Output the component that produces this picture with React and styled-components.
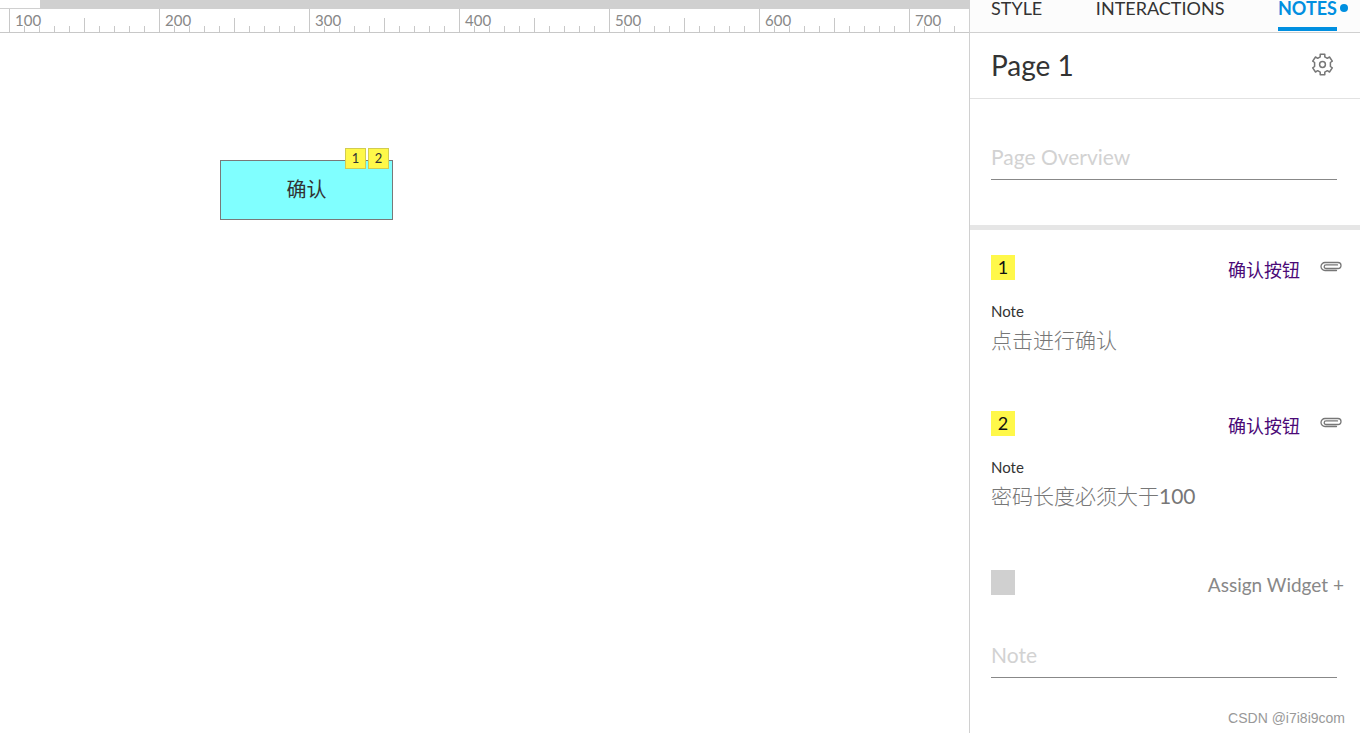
import React, { useState } from 'react'
import styled, { createGlobalStyle } from 'styled-components';

const GlobalStyle = createGlobalStyle`
  * {
    box-sizing: border-box;
  }
  body {
    margin: 0;
    background: #fff;
    color: #333;
    font-family: Lato, "Noto Sans CJK SC", sans-serif;
  }
  button, input {
    font-family: inherit;
  }
`;

const Workspace = styled.div`
  position: relative;
  display: flex;
  min-height: 100vh;
  overflow: hidden;
`;

const Editor = styled.main`
  flex: 1;
  min-width: 0;
  display: flex;
  flex-direction: column;
  overflow: hidden;
`;

const TabStrip = styled.div`
  display: flex;
  height: 9px;
  background: #d0d0d0;
`;

const OpenTab = styled.div`
  width: 40px;
  background: #fff;
  border-bottom: 1px solid #d0d0d0;
`;

const Ruler = styled.div`
  display: flex;
  height: 24px;
  padding-left: 9px;
  border-bottom: 1px solid #c8c8c8;
  overflow: hidden;
`;

const RulerSegment = styled.div`
  position: relative;
  flex: none;
  display: flex;
  align-items: flex-end;
  height: 100%;
`;

const Tick = styled.div`
  width: 15px;
  height: ${props => props.$height};
  border-left: 1px solid #c8c8c8;
`;

const RulerLabel = styled.span`
  position: absolute;
  left: 6px;
  top: 1px;
  font-size: 15px;
  line-height: 20px;
  color: #888;
`;

const Canvas = styled.div`
  position: relative;
  flex: 1;
`;

const Widget = styled.button`
  position: absolute;
  left: 220px;
  top: 127px;
  width: 173px;
  height: 60px;
  padding: 0 0 4px;
  border: 1px solid #797979;
  background: #80ffff;
  color: #333;
  font-size: 20px;
`;

const Footnotes = styled.span`
  position: absolute;
  right: 3px;
  top: -13px;
  display: flex;
  gap: 2px;
`;

const Footnote = styled.span`
  width: 21px;
  height: 21px;
  border: 1px solid #d2cc50;
  background: #fff849;
  font-size: 13px;
  line-height: 18px;
  text-align: center;
`;

const Inspector = styled.aside`
  flex: 0 0 391px;
  border-left: 1px solid #d0d0d0;
`;

const Tabs = styled.nav`
  display: flex;
  justify-content: space-between;
  height: 33px;
  padding: 0 23px 0 21px;
  background: #fcfcfc;
  border-bottom: 1px solid #d0d0d0;
`;

const Tab = styled.button`
  position: relative;
  height: 31px;
  padding: 0 0 10px;
  border: none;
  border-bottom: 4px solid ${props => props.$active ? '#008fe0' : 'transparent'};
  background: none;
  color: ${props => props.$active ? '#008fe0' : '#333'};
  font-size: 18px;
  font-weight: ${props => props.$active ? 'bold' : 'normal'};
  line-height: 17px;
  cursor: pointer;
`;

const Dot = styled.span`
  position: absolute;
  left: calc(100% + 3px);
  top: 4px;
  width: 8px;
  height: 8px;
  border-radius: 50%;
  background: #008fe0;
`;

const PageHeader = styled.header`
  display: flex;
  align-items: center;
  justify-content: space-between;
  height: 66px;
  padding: 0 26px 2px 21px;
  border-bottom: 1px solid #e2e2e2;
`;

const PageTitle = styled.h1`
  margin: 0;
  font-size: 28px;
  font-weight: normal;
`;

const IconButton = styled.button`
  display: flex;
  padding: 0;
  border: none;
  background: none;
  color: #777;
  cursor: pointer;
`;

const Overview = styled.section`
  padding: 36px 23px 45px 21px;
  border-bottom: 5px solid #e6e6e6;
`;

const Field = styled.input`
  display: block;
  width: 100%;
  height: 45px;
  padding: 0 0 2px;
  border: none;
  border-bottom: 1px solid #888;
  background: none;
  color: #777;
  font-size: 21px;
  outline: none;
  &::placeholder {
    color: #d2d2d2;
    opacity: 1;
  }
`;

const NoteList = styled.section`
  padding-top: 25px;
`;

const NoteItem = styled.article`
  height: 156px;
  padding: 0 18px 0 21px;
`;

const NewNote = styled.article`
  display: flex;
  flex-direction: column;
  gap: 16px;
  padding: 3px 23px 0 21px;
`;

const NoteHead = styled.div`
  display: flex;
  align-items: flex-start;
  height: 47px;
`;

const Marker = styled.span`
  width: 24px;
  height: 25px;
  margin-right: auto;
  background: ${props => props.$empty ? '#d0d0d0' : '#fff849'};
  color: #111;
  font-size: 18px;
  line-height: 24px;
  text-align: center;
`;

const WidgetLink = styled.a`
  margin-right: 20px;
  color: #4b0a77;
  font-size: 18px;
  line-height: 30px;
  text-decoration: none;
`;

const ClipButton = styled(IconButton)`
  padding-top: 6px;
`;

const NoteLabel = styled.label`
  display: block;
  font-size: 15px;
  line-height: 18px;
`;

const NoteValue = styled.input`
  width: 100%;
  height: 38px;
  padding: 0;
  border: none;
  background: none;
  color: #777;
  font-family: Lato, "Noto Sans CJK SC Light", "Noto Sans CJK SC", sans-serif;
  font-size: 21px;
  outline: none;
`;

const AssignButton = styled.button`
  margin-right: -7px;
  padding: 0;
  border: none;
  background: none;
  color: #888;
  font-size: 19px;
  line-height: 29px;
  cursor: pointer;
`;

const Watermark = styled.footer`
  position: absolute;
  right: 15px;
  bottom: 6px;
  color: #999;
  font-family: "Liberation Sans", sans-serif;
  font-size: 14px;
  line-height: 18px;
`;

const marks = [100, 200, 300, 400, 500, 600, 700];
const tabs = ['STYLE', 'INTERACTIONS', 'NOTES'];
const initialNotes = [
  { id: 1, widget: '确认按钮', text: '点击进行确认' },
  { id: 2, widget: '确认按钮', text: '密码长度必须大于100' },
];

const tickHeight = (index) => {
  if (index === 0) return '100%';
  return index === 5 ? '14px' : '6px';
}

function GearIcon() {
  return (
    <svg width="23" height="23" viewBox="0 0 23 23" fill="none" stroke="currentColor" strokeWidth="1.5" strokeLinejoin="round">
      <path d="M9.2 1.3h4.6v2.6l2.5 1.4 2.2-1.3 2.8 4.2-1.9 1.3v4l1.9 1.3-2.8 4.2-2.2-1.3-2.5 1.4v2.6H9.2v-2.6l-2.5-1.4L4.5 19l-2.8-4.2 1.9-1.3v-4L1.7 8.2 4.5 4l2.2 1.3 2.5-1.4z" />
      <circle cx="11.5" cy="11.5" r="2.9" />
    </svg>
  )
}

function ClipIcon() {
  return (
    <svg width="22" height="11" viewBox="0 0 22 11" fill="none" stroke="currentColor" strokeWidth="1.3" strokeLinecap="round">
      <path d="M16.5 9.5H5a4 4 0 0 1 0-8h13a3 3 0 0 1 0 6H6a1.8 1.8 0 0 1 0-3.6h11.5" />
    </svg>
  )
}

function App() {
  const [activeTab, setActiveTab] = useState('NOTES');
  const [notes, setNotes] = useState(initialNotes);

  const handleChange = (id, text) => {
    setNotes(notes.map(note => note.id === id ? { ...note, text } : note));
  }

  return (
    <Workspace>
      <GlobalStyle />
      <Editor>
        <TabStrip>
          <OpenTab />
        </TabStrip>
        <Ruler>
          {marks.map(mark => (
            <RulerSegment key={mark}>
              {Array.from({ length: 10 }, (_, i) => <Tick key={i} $height={tickHeight(i)} />)}
              <RulerLabel>{mark}</RulerLabel>
            </RulerSegment>
          ))}
        </Ruler>
        <Canvas>
          <Widget>
            确认
            <Footnotes>
              {notes.map(note => <Footnote key={note.id}>{note.id}</Footnote>)}
            </Footnotes>
          </Widget>
        </Canvas>
      </Editor>
      <Inspector>
        <Tabs>
          {tabs.map(tab => (
            <Tab key={tab} $active={tab === activeTab} onClick={() => setActiveTab(tab)}>
              {tab}
              {tab === 'NOTES' && <Dot />}
            </Tab>
          ))}
        </Tabs>
        <PageHeader>
          <PageTitle>Page 1</PageTitle>
          <IconButton aria-label="Settings"><GearIcon /></IconButton>
        </PageHeader>
        <Overview>
          <Field aria-label="Page Overview" placeholder="Page Overview" />
        </Overview>
        <NoteList>
          {notes.map(note => (
            <NoteItem key={note.id}>
              <NoteHead>
                <Marker>{note.id}</Marker>
                <WidgetLink href="#widget">{note.widget}</WidgetLink>
                <ClipButton aria-label="Attach"><ClipIcon /></ClipButton>
              </NoteHead>
              <NoteLabel htmlFor={`note-${note.id}`}>Note</NoteLabel>
              <NoteValue
                id={`note-${note.id}`}
                value={note.text}
                onChange={e => handleChange(note.id, e.target.value)}
              />
            </NoteItem>
          ))}
          <NewNote>
            <NoteHead>
              <Marker $empty />
              <AssignButton>Assign Widget +</AssignButton>
            </NoteHead>
            <Field aria-label="Note" placeholder="Note" />
          </NewNote>
        </NoteList>
      </Inspector>
      <Watermark>CSDN @i7i8i9com</Watermark>
    </Workspace>
  )
}

export default App;
